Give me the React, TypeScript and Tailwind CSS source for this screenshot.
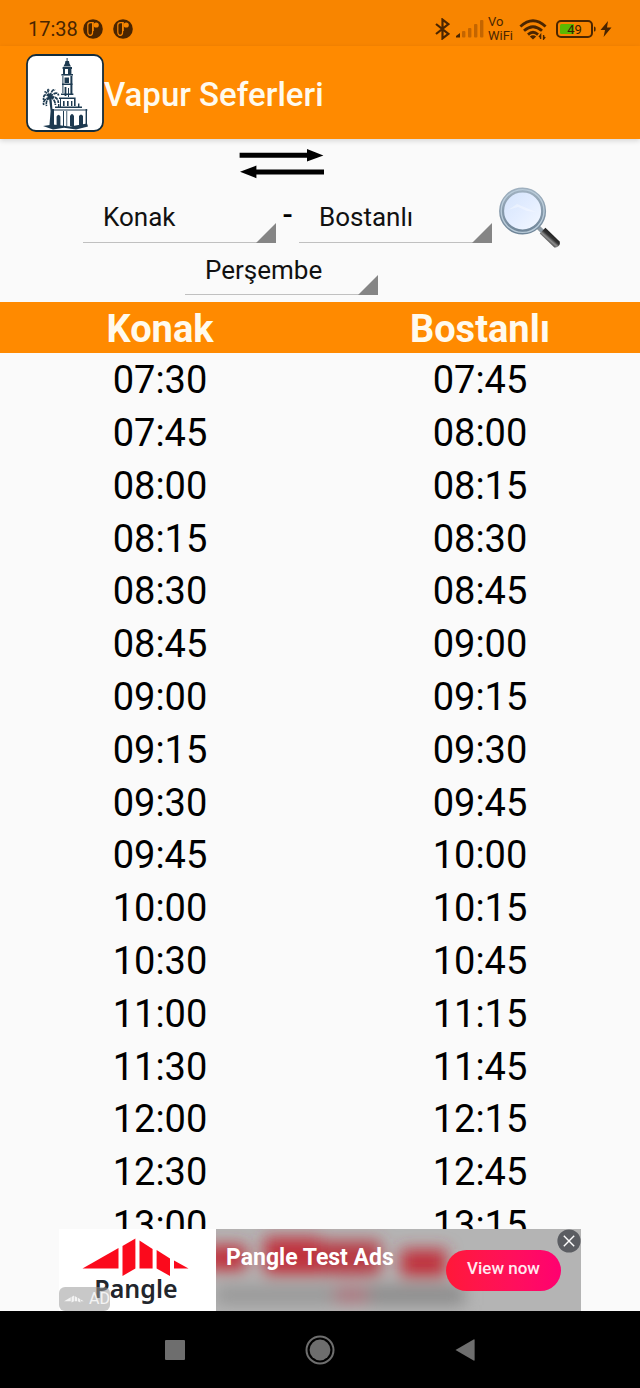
import type { ReactNode } from "react";

type Trip = { departure: string; arrival: string };

interface SpinnerProps {
  label: string;
  value: string;
  options: string[];
}

const PIERS = ["Konak", "Bostanlı", "Karşıyaka", "Alsancak", "Pasaport", "Göztepe", "Üçkuyular"];

const DAYS = ["Pazartesi", "Salı", "Çarşamba", "Perşembe", "Cuma", "Cumartesi", "Pazar"];

const TRIPS: Trip[] = [
  { departure: "07:30", arrival: "07:45" },
  { departure: "07:45", arrival: "08:00" },
  { departure: "08:00", arrival: "08:15" },
  { departure: "08:15", arrival: "08:30" },
  { departure: "08:30", arrival: "08:45" },
  { departure: "08:45", arrival: "09:00" },
  { departure: "09:00", arrival: "09:15" },
  { departure: "09:15", arrival: "09:30" },
  { departure: "09:30", arrival: "09:45" },
  { departure: "09:45", arrival: "10:00" },
  { departure: "10:00", arrival: "10:15" },
  { departure: "10:30", arrival: "10:45" },
  { departure: "11:00", arrival: "11:15" },
  { departure: "11:30", arrival: "11:45" },
  { departure: "12:00", arrival: "12:15" },
  { departure: "12:30", arrival: "12:45" },
  { departure: "13:00", arrival: "13:15" },
];

function NotificationIcon() {
  return (
    <svg viewBox="0 0 20 20" className="size-5" aria-hidden="true">
      <circle cx="10" cy="10" r="9.8" fill="#4a2500" />
      <path
        d="M9.4 3.6H7.4C5.6 3.6 4.8 4.4 4.8 6V12.6C4.8 15.4 5.6 16.4 7.2 16.4C8.8 16.4 9.6 15 9.6 13V3.6"
        fill="none"
        stroke="#f88600"
        strokeWidth="1.2"
      />
      <path d="M9 3H10.8V12H9Z" fill="#f88600" />
      <circle cx="13.2" cy="6" r="2.6" fill="#f88600" />
    </svg>
  );
}

function BluetoothIcon() {
  return (
    <svg viewBox="0 0 15 22" className="h-[22px] w-[15px]" fill="none" stroke="#4a2500" strokeWidth="2.2" aria-hidden="true">
      <path d="M1 6L13.4 15.8L7.5 20.4V1.6L13.4 6.2L1 16" />
    </svg>
  );
}

function SignalIcon() {
  return (
    <svg viewBox="0 0 28 18" className="h-[18px] w-7" aria-hidden="true">
      <path d="M0 17.5V16L4 13V17.5Z" fill="#4a2500" />
      <g fill="#c46500">
        <rect x="6" y="11" width="3.4" height="6.5" rx="1" />
        <rect x="12" y="8" width="3.4" height="9.5" rx="1" />
        <rect x="18" y="4" width="3.4" height="13.5" rx="1" />
        <rect x="24" y="0" width="3.4" height="17.5" rx="1" />
      </g>
    </svg>
  );
}

function WifiIcon() {
  return (
    <svg viewBox="0 0 28 21" className="h-[21px] w-7" fill="none" stroke="#4a2500" strokeWidth="2.8" aria-hidden="true">
      <path d="M1.4 7.5Q14 -4 26.6 7.5" />
      <path d="M5 11.8Q14 3.6 23 11.8" />
      <path d="M9 15.6Q14 11 19 15.6" />
      <path d="M10.8 17.4Q14 15 17.2 17.4L14 20.6Z" fill="#4a2500" stroke="none" />
      <path d="M21.6 20V16L20 18.2M24.6 16V20L26.2 18" strokeWidth="1.4" />
    </svg>
  );
}

function BatteryIcon() {
  return (
    <svg viewBox="0 0 40 18" className="h-[18px] w-10" role="img" aria-label="Pil yüzde 49">
      <rect x="1" y="1" width="35" height="16" rx="4" fill="none" stroke="#4a2500" strokeWidth="2" />
      <path d="M5.5 4H18V14H5.5Q4 14 4 12.5V5.5Q4 4 5.5 4Z" fill="#5cb800" />
      <path d="M38 6.5Q39.6 6.5 39.6 8V10Q39.6 11.5 38 11.5Z" fill="#4a2500" />
      <text x="18.5" y="13.5" textAnchor="middle" fontFamily="Roboto, sans-serif" fontSize="13" fill="#3a2000">
        49
      </text>
    </svg>
  );
}

function StatusBar() {
  return (
    <div className="flex h-[46px] shrink-0 items-center justify-between bg-[#f88500] px-7 pt-3 text-[#4a2500]">
      <div className="flex items-center gap-[10px]">
        <div className="flex items-center gap-[5px]">
          <span className="text-xl leading-6">17:38</span>
          <NotificationIcon />
        </div>
        <NotificationIcon />
      </div>
      <div className="flex items-center gap-[6px]">
        <BluetoothIcon />
        <div className="flex items-center gap-1">
          <SignalIcon />
          <div className="text-[13px] leading-[14px]">
            <div>Vo</div>
            <div>WiFi</div>
          </div>
        </div>
        <WifiIcon />
        <div className="flex items-center gap-1 pl-[3px]">
          <BatteryIcon />
          <svg viewBox="0 0 12 16" className="h-4 w-3" fill="#4a2500" aria-hidden="true">
            <path d="M8 0L0.5 9H5L3.6 16L11.5 6.4H7Z" />
          </svg>
        </div>
      </div>
    </div>
  );
}

/* Clock tower with the palm tree next to it */
function TowerLogo() {
  return (
    <svg viewBox="0 0 78 78" className="size-[78px] shrink-0" aria-hidden="true">
      <rect x="1" y="1" width="76" height="76" rx="9" fill="#fff" stroke="#132c3c" strokeWidth="1.8" />
      <g fill="#1d3a50">
        <path d="M40.6 4H41.6V7H43L43.4 9.5L45 12.5H37.4L39 9.5L39.4 7H40.6Z" />
        <path d="M36.6 13H46V15H36.6Z" />
        <path d="M37 15H39V20H37ZM42 15H45.4V20H42Z" />
        <path d="M35.4 20H47V21.6H35.4Z" />
        <path d="M36.4 22H37.4V39H36.4ZM44.4 22H46.4V40H44.4Z" />
        <path d="M38.5 23.5H43V29H38.5Z" />
        <path d="M36 29.5H46.5V31H36Z" />
        <path d="M38.6 33H40.4V42H38.6ZM42 34H43V43H42Z" />
        <path d="M35 39.5H47.4V41H35Z" />
        <path d="M33 43.4H49.6V45H33ZM34 45H35V54H34ZM48 45H49.6V52H48Z" />
        <path d="M37 47H38.6V52H37ZM41 47H42.6V52H41ZM45 47H46.4V52H45Z" />
        <path d="M29 52.6H56V54H29ZM32 50H33.4V53H32ZM52 49.6H53.4V53H52Z" />
        <path d="M26 55H28V72H26ZM59.6 55H61V71H59.6ZM27 55.4H61.4V56.6H27Z" />
        <path d="M30.6 72V62.5Q32.5 59 34.4 62.5V72ZM44 72V62Q46 58 48 62V72ZM53 71V62Q55 59 57 62V71Z" />
        <path d="M37 57H38V72H37ZM40.4 57H41.2V72H40.4Z" />
        <path d="M17 72L27 70.4L44 72.6L61 69.6L62 72.6L50 75.6L38 73.8L27 75.6Z" />
        <path d="M23 44L25.4 43L26.6 57L27.4 72H23.4L24.6 57Z" />
      </g>
      <g fill="none" stroke="#1d3a50" strokeWidth="1.7" strokeDasharray="4 0.6">
        <path d="M24 43Q17 37.5 17.6 46M24 43Q16 46 17.8 51M24 43Q18 36 19.4 38.4" />
        <path d="M24 43Q20 33 23.6 36.4M24 43Q26 34 29 36.4M24 43Q31 36 32.6 41.4" />
        <path d="M24 43Q32 42 32.4 49M24 43Q29 45 29.4 51M24 43Q19 47 20.6 52" />
      </g>
    </svg>
  );
}

function SwapIcon() {
  return (
    <svg viewBox="0 0 86 30" className="h-[30px] w-[86px]" aria-hidden="true">
      <path d="M0.6 3.8H68V0L84.4 6.4L68 12.6V8.8H0.6Z" />
      <path d="M85 20.4H17.4V16.6L1 22.8L17.4 29.2V25.4H85Z" />
    </svg>
  );
}

function MagnifierIcon() {
  return (
    <svg viewBox="0 0 62 62" className="size-[62px]" aria-hidden="true">
      <defs>
        <linearGradient id="lens" x1="0" y1="0" x2="1" y2="1">
          <stop offset="0" stopColor="#d3e3fb" />
          <stop offset="0.5" stopColor="#e3edff" />
          <stop offset="1" stopColor="#f5f9ff" />
        </linearGradient>
        <linearGradient id="rim" x1="0" y1="0" x2="0" y2="1">
          <stop offset="0" stopColor="#9fb0bf" />
          <stop offset="1" stopColor="#6f8598" />
        </linearGradient>
        <linearGradient id="grip" gradientUnits="userSpaceOnUse" x1="47" y1="56" x2="54" y2="48">
          <stop offset="0" stopColor="#1c1c1c" />
          <stop offset="0.45" stopColor="#8f8f8f" />
          <stop offset="0.7" stopColor="#333" />
          <stop offset="1" stopColor="#222" />
        </linearGradient>
      </defs>
      <path d="M38 39L45 46" stroke="#8f9aa3" strokeWidth="4.5" />
      <path d="M46.4 40.8L60.6 54.6C61.8 58 59 61 55.4 60.4L40.8 46.6Z" fill="url(#grip)" />
      <circle cx="23.6" cy="24" r="21" fill="url(#lens)" stroke="url(#rim)" strokeWidth="5" />
      <circle cx="23.6" cy="24" r="21.4" fill="none" stroke="#b9cbd9" strokeWidth="1.4" />
      <path d="M9 23L18 17L37 25L28 24L19 20Z" fill="#fff" opacity="0.35" />
    </svg>
  );
}

function Spinner({ label, value, options }: SpinnerProps) {
  return (
    <div className="relative w-[193px]">
      <select
        aria-label={label}
        defaultValue={value}
        className="block h-[49px] w-full appearance-none rounded-none border-b border-[#c0c0c0] bg-transparent pr-5 pl-5 text-[26px] text-[#111] outline-none"
      >
        {options.map((option) => (
          <option key={option} value={option}>
            {option}
          </option>
        ))}
      </select>
      <svg viewBox="0 0 20 20" className="pointer-events-none absolute right-0 bottom-0 size-5" aria-hidden="true">
        <path d="M20 0V20H0Z" fill="#858585" />
      </svg>
    </div>
  );
}

function PangleMark({ className }: { className: string }) {
  return (
    <svg viewBox="0 0 108 38" className={className} fill="currentColor" aria-hidden="true">
      <path d="M0.5 30.5L36.5 10V30.5Z" />
      <path d="M40.5 8L53.4 0.5V30.5L40.5 38Z" />
      <path d="M57.5 2.6L70.6 11V30.5H57.5Z" />
      <path d="M74.6 12L88 20.5V38L74.6 30.5Z" />
      <path d="M92 22.5L106.5 30.5H92Z" />
    </svg>
  );
}

function AdBanner() {
  return (
    <aside className="mx-auto flex h-[82px] w-full max-w-[522px] shrink-0">
      <div className="relative flex w-[157px] shrink-0 flex-col items-center bg-white pt-[9px] pr-[3px]">
        <PangleMark className="h-[38px] w-[108px] text-[#fb0a1c]" />
        <span className="font-['Noto_Sans'] text-[25px] leading-6 font-semibold text-[#22262c]">Pangle</span>
        <div className="absolute bottom-0 left-0 flex h-6 w-[51px] items-center gap-[5px] rounded-md bg-[#9a9a9a]/55 pl-[5px] text-white/80">
          <PangleMark className="h-2 w-[22px]" />
          <span className="text-base leading-6">AD</span>
        </div>
      </div>
      <div className="relative flex flex-1 items-center justify-between overflow-hidden bg-[#b4b4b4] pr-5 pl-[10px]">
        <svg viewBox="0 0 364 82" className="absolute inset-0 h-full w-full" preserveAspectRatio="none" aria-hidden="true">
          <defs>
            <filter id="smear" x="-20%" y="-50%" width="140%" height="200%">
              <feGaussianBlur stdDeviation="8" />
            </filter>
          </defs>
          <g filter="url(#smear)">
            <rect x="-10" y="16" width="40" height="26" fill="#c0303c" />
            <rect x="48" y="8" width="56" height="38" fill="#c0303c" />
            <rect x="104" y="12" width="60" height="34" fill="#b83a44" />
            <rect x="184" y="20" width="46" height="28" fill="#c0303c" />
            <rect x="0" y="56" width="118" height="20" fill="#999" />
            <rect x="118" y="58" width="34" height="16" fill="#a8727a" />
            <rect x="152" y="56" width="96" height="20" fill="#8c8c8c" />
          </g>
        </svg>
        <h2 className="relative -mt-6 text-[23px] leading-7 font-bold whitespace-nowrap text-white">Pangle Test Ads</h2>
        <button
          type="button"
          className="relative h-[41px] w-[115px] rounded-full bg-linear-to-r from-[#ff1838] to-[#ff0070] pb-1 text-[17px] leading-5 font-medium whitespace-nowrap text-[#ffeaf0]"
        >
          View now
        </button>
        <button type="button" aria-label="Reklamı kapat" className="absolute top-0 right-0 size-6">
          <svg viewBox="0 0 24 24" className="size-6" aria-hidden="true">
            <circle cx="12" cy="12" r="11.6" fill="#5b5d62" />
            <path d="M6.8 6.8L17.2 17.2M17.2 6.8L6.8 17.2" stroke="#fff" strokeWidth="1.4" />
          </svg>
        </button>
      </div>
    </aside>
  );
}

function NavButton({ label, children }: { label: string; children: ReactNode }) {
  return (
    <button type="button" aria-label={label} className="flex items-center justify-center">
      {children}
    </button>
  );
}

function NavigationBar() {
  return (
    <nav className="flex h-[77px] shrink-0 items-center justify-center gap-[120px] bg-black">
      <NavButton label="Son uygulamalar">
        <svg viewBox="0 0 20 20" className="size-5">
          <rect width="20" height="20" rx="1" fill="#6e6e6e" />
        </svg>
      </NavButton>
      <NavButton label="Ana ekran">
        <svg viewBox="0 0 30 30" className="size-[30px]">
          <circle cx="15" cy="15" r="13.5" fill="none" stroke="#6e6e6e" strokeWidth="2" />
          <circle cx="15" cy="15" r="10.4" fill="#6e6e6e" />
        </svg>
      </NavButton>
      <NavButton label="Geri">
        <svg viewBox="0 0 20 22" className="h-[22px] w-5">
          <path d="M0.5 11L18.6 0.4Q19.6 0 19.6 1V21Q19.6 22 18.6 21.6Z" fill="#6e6e6e" />
        </svg>
      </NavButton>
    </nav>
  );
}

export default function App() {
  return (
    <div className="flex h-screen flex-col bg-[#fafafa] font-['Roboto','Noto_Sans',sans-serif] text-black">
      <StatusBar />
      <header className="relative flex h-[93px] shrink-0 items-center bg-[#ff8a00] pl-[26px] shadow-[0_2px_5px_rgba(0,0,0,0.14)]">
        <TowerLogo />
        <h1 className="pt-1 text-[33px] leading-10 font-medium text-[#fffaee]">Vapur Seferleri</h1>
      </header>

      <form className="flex shrink-0 flex-col items-center pt-[10px] pb-[7px]" onSubmit={(e) => e.preventDefault()}>
        <div className="pr-[77px]">
          <button type="button" aria-label="Yön değiştir" className="block">
            <SwapIcon />
          </button>
        </div>
        <div className="flex items-center pt-2 pl-1">
          <div className="flex items-start">
            <Spinner label="Kalkış" value="Konak" options={PIERS} />
            <span className="w-[23px] text-center text-[30px] leading-[42px] font-medium">-</span>
            <Spinner label="Varış" value="Bostanlı" options={PIERS} />
          </div>
          <button type="submit" aria-label="Ara" className="pl-[7px]">
            <MagnifierIcon />
          </button>
        </div>
        <div className="-mt-[3px] pr-[77px]">
          <Spinner label="Gün" value="Perşembe" options={DAYS} />
        </div>
      </form>

      <main className="min-h-0 flex-1 overflow-y-auto [scrollbar-width:none]">
        <table className="w-full table-fixed text-center">
          <thead>
            <tr className="bg-[#ff8a00] text-[38px] leading-[48px] text-[#fffaee]">
              <th className="p-0 pt-[3px] font-bold">Konak</th>
              <th className="p-0 pt-[3px] font-bold">Bostanlı</th>
            </tr>
          </thead>
          <tbody className="text-[38px] leading-[52px]">
            {TRIPS.map((trip) => (
              <tr key={trip.departure} className="h-[53px] nth-[5n]:h-[52px]">
                <td className="p-0">{trip.departure}</td>
                <td className="p-0">{trip.arrival}</td>
              </tr>
            ))}
          </tbody>
        </table>
      </main>

      <AdBanner />
      <NavigationBar />
    </div>
  );
}
